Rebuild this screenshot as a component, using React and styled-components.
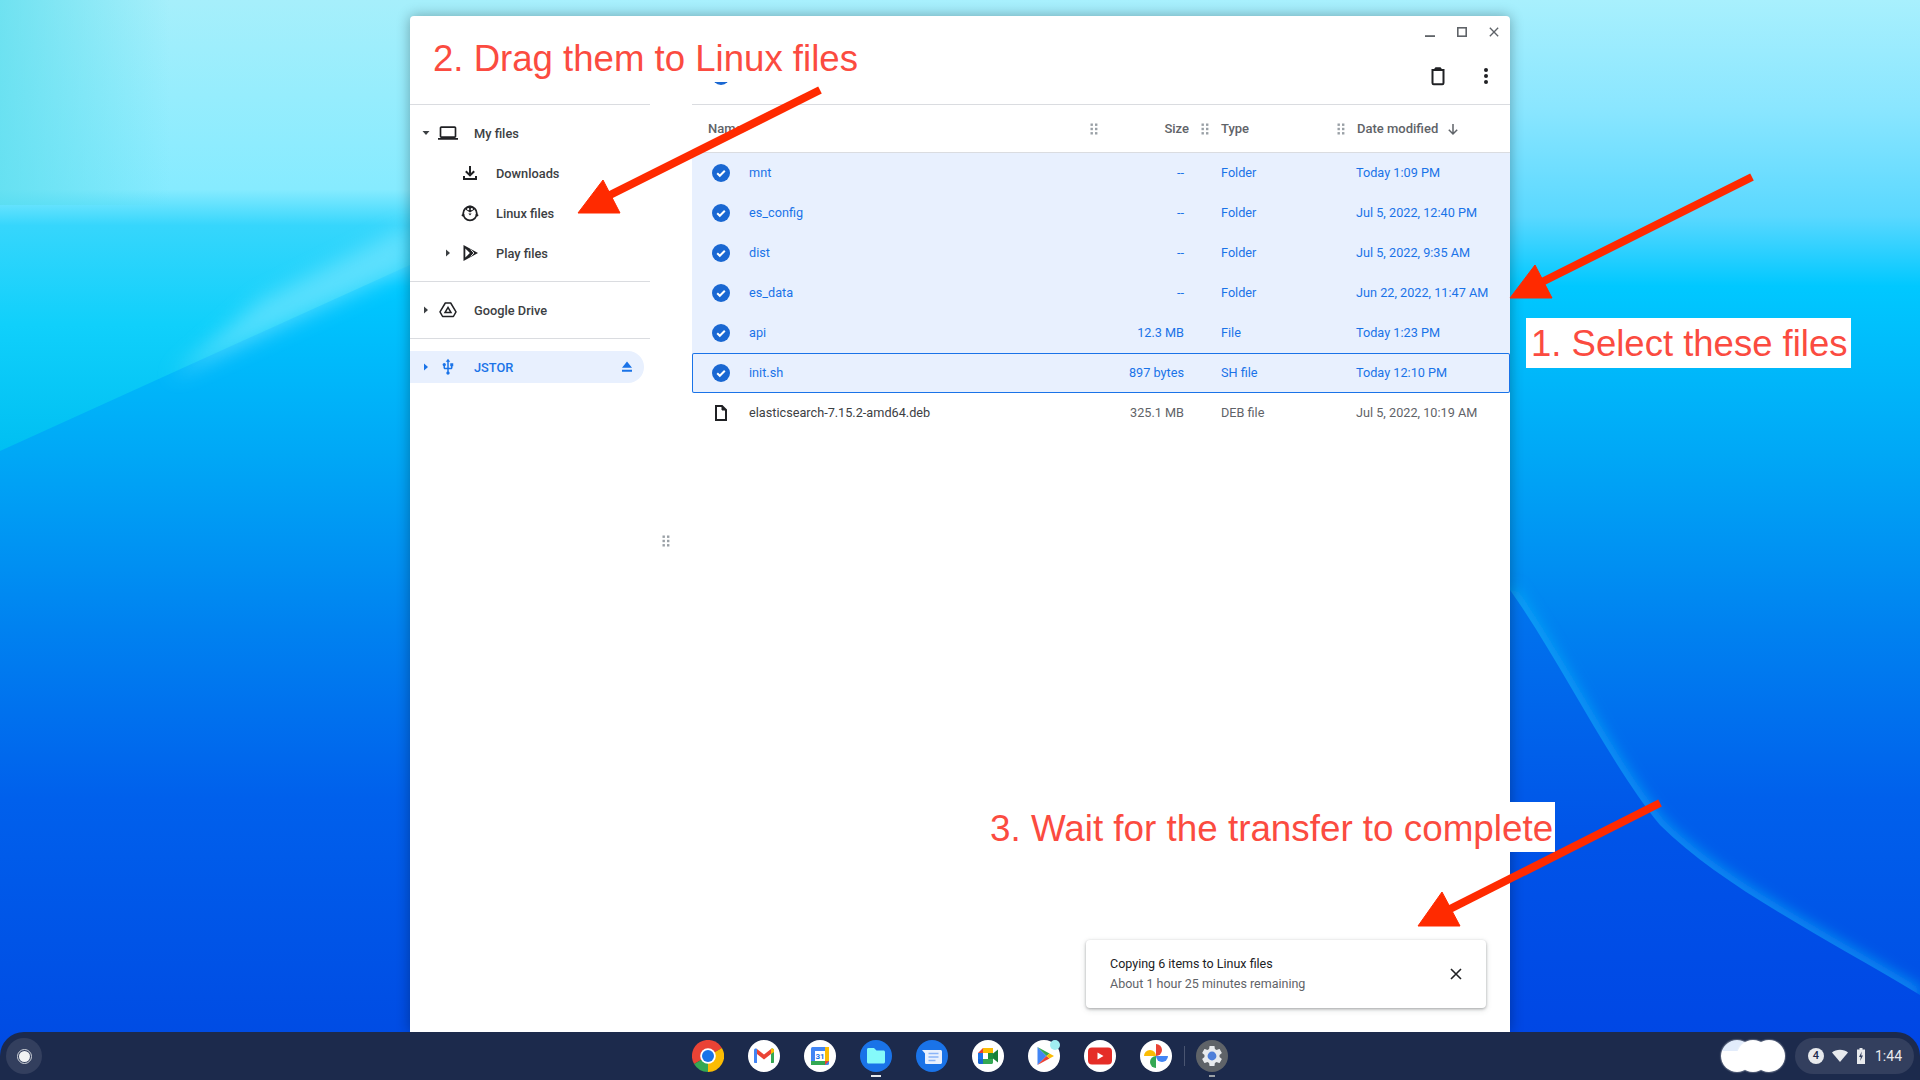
import React from "react";
import styled, { createGlobalStyle } from "styled-components";

const GlobalStyle = createGlobalStyle`
  html, body { margin: 0; padding: 0; }
  body { font-family: Roboto, "Liberation Sans", sans-serif; overflow: hidden; }
`;

const Desktop = styled.div`
  position: relative;
  width: 1920px;
  height: 1080px;
  display: flex;
  flex-direction: column;
  overflow: hidden;
  background: #0060ea;
`;

const Wallpaper = styled.svg`
  position: absolute;
  inset: 0;
`;

const Overlay = styled.svg`
  position: absolute;
  inset: 0;
  pointer-events: none;
`;

const Stage = styled.div`
  position: relative;
  flex: 1;
  display: flex;
  padding: 16px 410px 0;
  min-height: 0;
`;

const Window = styled.div`
  position: relative;
  flex: 1;
  min-width: 0;
  display: flex;
  flex-direction: column;
  background: #fff;
  border-radius: 4px 4px 0 0;
  box-shadow: 0 0 14px rgba(0, 0, 0, 0.32);
`;

const Header = styled.div`
  display: flex;
  justify-content: space-between;
  height: 89px;
`;

const HeaderLeft = styled.div`
  width: 240px;
  border-bottom: 1px solid #dadce0;
`;

const HeaderRight = styled.div`
  width: 818px;
  border-bottom: 1px solid #dadce0;
`;

const Controls = styled.div`
  display: flex;
  justify-content: flex-end;
  height: 32px;
`;

const Control = styled.div`
  width: 32px;
  height: 32px;
  display: flex;
  align-items: center;
  justify-content: center;
  color: #5f6368;
`;

const Toolbar = styled.div`
  display: flex;
  align-items: center;
  margin-top: 4px;
  height: 48px;
  padding-left: 20px;
`;

const ToolSpacer = styled.div`
  flex: 1;
`;

const ToolButton = styled.div`
  width: 48px;
  height: 48px;
  display: flex;
  align-items: center;
  justify-content: center;
  color: #202124;
`;

const Body = styled.div`
  flex: 1;
  display: flex;
  min-height: 0;
`;

const Sidebar = styled.div`
  width: 240px;
`;

const NavGroup = styled.div`
  padding: 8px 0;
  border-bottom: 1px solid #dadce0;
`;

const NavItem = styled.div`
  display: flex;
  align-items: center;
  height: 40px;
  padding-left: ${(p) => 10 + p.$level * 22}px;
  color: #3c4043;
  font-size: 12.8px;
  font-weight: 500;
`;

const ActiveItem = styled(NavItem)`
  height: 32px;
  width: 234px;
  box-sizing: border-box;
  margin-top: 12px;
  background: #e8f0fe;
  border-radius: 0 16px 16px 0;
  color: #1a73e8;
`;

const Caret = styled.div`
  width: 12px;
  display: flex;
  justify-content: center;
  margin-right: 4px;
`;

const NavIcon = styled.div`
  width: 24px;
  height: 24px;
  display: flex;
  align-items: center;
  justify-content: center;
  margin-right: 14px;
  color: #202124;
  ${ActiveItem} & { color: #1a73e8; }
`;

const NavLabel = styled.div`
  flex: 1;
`;

const EjectIcon = styled.div`
  display: flex;
  margin-right: 10px;
`;

const SplitColumn = styled.div`
  width: 42px;
  display: flex;
  align-items: center;
  justify-content: center;
  padding: 0 10px 56px 0;
  box-sizing: border-box;
`;

const FileList = styled.div`
  flex: 1;
  min-width: 0;
`;

const HeadRow = styled.div`
  display: grid;
  grid-template-columns: 406px 111px 136px minmax(0, 1fr);
  height: 48px;
  box-sizing: border-box;
  border-bottom: 1px solid #dadce0;
  color: #5f6368;
  font-size: 13px;
  font-weight: 500;
`;

const HeadCell = styled.div`
  display: flex;
  align-items: center;
  padding-left: ${(p) => p.$pad || 0}px;
  justify-content: ${(p) => p.$justify || "space-between"};
`;

const SizeLabel = styled.div`
  margin-right: 12px;
`;

const SortIcon = styled.div`
  display: flex;
  margin-left: 8px;
`;

const Row = styled.div`
  display: grid;
  grid-template-columns: 57px minmax(0, 1fr) 120px 172px 154px;
  height: 40px;
  box-sizing: border-box;
  padding-bottom: 1px;
  align-items: center;
  font-size: 12.7px;
  color: ${(p) => (p.$selected ? "#1a73e8" : "#5f6368")};
  background: ${(p) => (p.$selected ? "#e8f0fe" : "transparent")};
  ${(p) => p.$focus && "box-shadow: inset 0 0 0 1px #1a73e8; border-radius: 2px;"}
`;

const RowIcon = styled.div`
  display: flex;
  justify-content: center;
  color: #202124;
`;

const FileName = styled.div`
  color: ${(p) => (p.$selected ? "#1a73e8" : "#3c4043")};
`;

const SizeCell = styled.div`
  text-align: right;
`;

const TypeCell = styled.div`
  padding-left: 37px;
`;

const Toast = styled.div`
  position: absolute;
  right: 24px;
  bottom: 24px;
  width: 400px;
  height: 68px;
  box-sizing: border-box;
  padding: 0 24px;
  display: flex;
  align-items: center;
  justify-content: space-between;
  background: #fff;
  border-radius: 4px;
  box-shadow: 0 1px 3px rgba(60, 64, 67, 0.4), 0 2px 6px rgba(60, 64, 67, 0.15);
`;

const ToastTitle = styled.div`
  font-size: 12.5px;
  line-height: 20px;
  color: #202124;
`;

const ToastSub = styled.div`
  font-size: 12.5px;
  line-height: 20px;
  color: #5f6368;
`;

const ToastClose = styled.div`
  display: flex;
  color: #202124;
`;

const Note = styled.div`
  position: absolute;
  left: ${(p) => p.$x}px;
  top: ${(p) => p.$y}px;
  width: ${(p) => p.$w}px;
  height: ${(p) => p.$h}px;
  box-sizing: border-box;
  padding-left: ${(p) => p.$pad}px;
  background: #fff;
  color: #fb4b40;
  font-family: "Liberation Sans", Arial, sans-serif;
  font-size: ${(p) => p.$size}px;
  line-height: ${(p) => p.$line}px;
  white-space: nowrap;
`;

const Shelf = styled.div`
  position: relative;
  height: 48px;
  display: grid;
  grid-template-columns: 1fr auto 1fr;
  align-items: center;
  background: #1c2a4c;
  border-radius: 24px 24px 0 0;
`;

const ShelfLeft = styled.div`
  display: flex;
  padding-left: 6px;
`;

const Launcher = styled.div`
  width: 36px;
  height: 36px;
  border-radius: 50%;
  background: #333f5e;
  display: flex;
  align-items: center;
  justify-content: center;
`;

const LauncherRing = styled.div`
  width: 11px;
  height: 11px;
  border-radius: 50%;
  background: #f1f3f4;
  outline: 1px solid #cfd3da;
  outline-offset: 1.5px;
`;

const AppRow = styled.div`
  display: flex;
  align-items: center;
  gap: 24px;
`;

const AppIcon = styled.div`
  position: relative;
  width: 32px;
  height: 32px;
  display: flex;

  &::after {
    content: "";
    display: ${(p) => (p.$mark ? "block" : "none")};
    position: absolute;
    left: 50%;
    bottom: -5px;
    width: ${(p) => p.$mark}px;
    height: 2px;
    transform: translateX(-50%);
    background: ${(p) => (p.$mark > 6 ? "#e8eaed" : "#9aa0a6")};
  }
`;

const ShelfDivider = styled.div`
  width: 1px;
  height: 20px;
  background: #4a5571;
  margin: 0 -12.5px;
`;

const ShelfRight = styled.div`
  display: flex;
  align-items: center;
  justify-content: flex-end;
  padding-right: 6px;
`;

const Thumbs = styled.div`
  display: flex;
  margin-right: 10px;
`;

const Thumb = styled.div`
  width: 32px;
  height: 32px;
  border-radius: 50%;
  background: ${(p) =>
    p.$first ? "linear-gradient(180deg, #e2ecfb 0 34%, #fff 34%)" : "#fff"};
  box-shadow: 0 0 1px 1px rgba(255, 255, 255, 0.25);
  margin-left: ${(p) => (p.$first ? 0 : -16)}px;
`;

const StatusPill = styled.div`
  display: flex;
  align-items: center;
  width: 119px;
  height: 36px;
  box-sizing: border-box;
  padding-left: 13px;
  border-radius: 18px;
  background: #333f5e;
  color: #e8eaed;
  font-size: 14px;
`;

const Badge = styled.div`
  width: 16px;
  height: 16px;
  border-radius: 50%;
  background: #e8eaed;
  color: #1c2a4c;
  font-size: 11px;
  font-weight: 500;
  line-height: 16px;
  text-align: center;
  margin-right: 8px;
`;

const StatusIcon = styled.div`
  display: flex;
  margin-right: ${(p) => p.$gap}px;
`;

const Check = () => (
  <svg width="18" height="18" viewBox="0 0 18 18">
    <circle cx="9" cy="9" r="9" fill="#1967d2" />
    <path d="M5.2 9.3l2.6 2.5 5-5" fill="none" stroke="#fff" strokeWidth="2" />
  </svg>
);

const Arrowhead = ({ open, color = "#3c4043" }) => (
  <svg width="10" height="10" viewBox="0 0 10 10">
    <path d={open ? "M1.5 3h7L5 7z" : "M3 1.5v7L7 5z"} fill={color} />
  </svg>
);

const Dots = () => (
  <svg width="8" height="12" viewBox="0 0 8 12" fill="#9aa0a6">
    <rect x="0.5" y="0.5" width="2.4" height="2.4" />
    <rect x="5" y="0.5" width="2.4" height="2.4" />
    <rect x="0.5" y="4.8" width="2.4" height="2.4" />
    <rect x="5" y="4.8" width="2.4" height="2.4" />
    <rect x="0.5" y="9.1" width="2.4" height="2.4" />
    <rect x="5" y="9.1" width="2.4" height="2.4" />
  </svg>
);

const CloseIcon = ({ size = 12, width = 1.6 }) => (
  <svg width={size} height={size} viewBox="0 0 12 12">
    <path d="M1 1l10 10M11 1L1 11" stroke="currentColor" strokeWidth={width} fill="none" />
  </svg>
);

const LaptopIcon = () => (
  <svg width="20" height="20" viewBox="0 0 24 24" fill="currentColor">
    <path d="M20 18c1.1 0 1.99-.9 1.99-2L22 6c0-1.1-.9-2-2-2H4c-1.1 0-2 .9-2 2v10c0 1.1.9 2 2 2H0v2h24v-2h-4zM4 6h16v10H4V6z" />
  </svg>
);

const DownloadIcon = () => (
  <svg width="16" height="16" viewBox="0 0 16 16" fill="none" stroke="currentColor" strokeWidth="2">
    <path d="M8 1v9M3.8 6.2L8 10.4l4.2-4.2M2 11v3h12v-3" />
  </svg>
);

const PenguinIcon = () => (
  <svg width="18" height="18" viewBox="0 0 18 18">
    <circle cx="9" cy="9.5" r="6.8" fill="none" stroke="currentColor" strokeWidth="1.8" />
    <path d="M9 1.5c2.6 0 4.2 2 4.2 4.2L9 8.6 4.8 5.7C4.8 3.5 6.4 1.5 9 1.5z" fill="currentColor" />
    <circle cx="7.2" cy="5.2" r="1.1" fill="#fff" />
    <circle cx="10.8" cy="5.2" r="1.1" fill="#fff" />
    <path d="M7.4 9.4h3.2L9 11.4z" fill="currentColor" />
    <path d="M0.8 11.8l2.4-1.4M17.2 11.8l-2.4-1.4" stroke="currentColor" strokeWidth="1.8" />
  </svg>
);

const PlayIcon = () => (
  <svg width="18" height="18" viewBox="0 0 18 18">
    <path d="M2.5 1v16L17 9z" fill="currentColor" />
    <path d="M4.3 4.4v9.2L8.9 9z" fill="#fff" />
    <path d="M9.8 5.6l3.1 3.4-3.1 3.4" fill="none" stroke="#fff" strokeWidth="0.9" />
  </svg>
);

const DriveIcon = () => (
  <svg width="18" height="18" viewBox="0 0 18 18" fill="none" stroke="currentColor" strokeWidth="1.5">
    <path d="M6.3 2h5.4L17 10.8 14.4 15.5H3.6L1 10.8z" strokeLinejoin="round" />
    <path d="M9 6.4l3 5.1H6z" />
  </svg>
);

const UsbIcon = () => (
  <svg width="18" height="18" viewBox="0 0 24 24" fill="currentColor">
    <path d="M15 7v4h1v2h-3V5h2l-3-4-3 4h2v8H8v-2.07c.7-.37 1.2-1.08 1.2-1.93 0-1.21-.99-2.2-2.2-2.2-1.21 0-2.2.99-2.2 2.2 0 .85.5 1.56 1.2 1.93V13c0 1.11.89 2 2 2h3v3.05c-.71.37-1.2 1.1-1.2 1.95 0 1.22.99 2.2 2.2 2.2 1.21 0 2.2-.98 2.2-2.2 0-.85-.49-1.58-1.2-1.95V15h3c1.11 0 2-.89 2-2v-2h1V7h-4z" />
  </svg>
);

const Eject = () => (
  <svg width="14" height="14" viewBox="0 0 14 14" fill="#1a73e8">
    <path d="M7 1.5l5 6.2H2zM2 9.7h10v2H2z" />
  </svg>
);

const TrashIcon = () => (
  <svg width="20" height="20" viewBox="0 0 20 20" fill="none" stroke="currentColor" strokeWidth="2">
    <path d="M4.5 4v13c0 .8.5 1.3 1.2 1.3h8.600c.7 0 1.200-.5 1.200-1.300V4M3.500 4h13M7 3.500l1-1.200h4l1 1.200" />
  </svg>
);

const MoreIcon = () => (
  <svg width="4" height="16" viewBox="0 0 4 16" fill="currentColor">
    <circle cx="2" cy="2" r="2" />
    <circle cx="2" cy="8" r="2" />
    <circle cx="2" cy="14" r="2" />
  </svg>
);

const FileIcon = () => (
  <svg width="14" height="16" viewBox="0 0 14 16">
    <path d="M2 1h6l4 4v10H2z" fill="none" stroke="currentColor" strokeWidth="2" />
    <path d="M8 1l4 4H8z" fill="currentColor" stroke="currentColor" />
  </svg>
);

const SortDown = () => (
  <svg width="14" height="14" viewBox="0 0 14 14" fill="none" stroke="#5f6368" strokeWidth="1.5">
    <path d="M7 2v10M2.8 7.8L7 12l4.2-4.2" />
  </svg>
);

const ChromeIcon = () => (
  <svg width="32" height="32" viewBox="0 0 32 32">
    <path d="M16 16L2.1 24A16 16 0 0 1 29.9 8z" fill="#ea4335" />
    <path d="M16 16L29.9 8A16 16 0 0 1 16 32z" fill="#fbbc04" />
    <path d="M16 16V32A16 16 0 0 1 2.1 24z" fill="#34a853" />
    <circle cx="16" cy="16" r="7.8" fill="#fff" />
    <circle cx="16" cy="16" r="6" fill="#1a73e8" />
  </svg>
);

const GmailIcon = () => (
  <svg width="32" height="32" viewBox="0 0 32 32">
    <circle cx="16" cy="16" r="16" fill="#fff" />
    <path d="M6 10.5c0-2 2-2.5 3-1.5v14H7c-.6 0-1-.4-1-1z" fill="#4285f4" />
    <path d="M26 10.5c0-2-2-2.5-3-1.5v14h2c.6 0 1-.4 1-1z" fill="#34a853" />
    <path d="M9 9l7 5.500L23 9v5l-7 5.500L9 14z" fill="#ea4335" />
    <path d="M23 9c1-1 3-.5 3 1.500V12l-3 2z" fill="#fbbc04" />
  </svg>
);

const CalendarIcon = () => (
  <svg width="32" height="32" viewBox="0 0 32 32">
    <circle cx="16" cy="16" r="16" fill="#fff" />
    <rect x="7" y="7" width="18" height="18" rx="1.5" fill="#4285f4" />
    <rect x="21" y="7" width="4" height="14" fill="#fbbc04" />
    <rect x="7" y="21" width="14" height="4" fill="#34a853" />
    <path d="M21 21h4l-4 4z" fill="#ea4335" />
    <rect x="11" y="11" width="10" height="10" fill="#fff" />
    <text x="16" y="19" fontSize="8" fontWeight="700" fontFamily="Roboto" textAnchor="middle" fill="#1a73e8">31</text>
  </svg>
);

const FilesIcon = () => (
  <svg width="32" height="32" viewBox="0 0 32 32">
    <circle cx="16" cy="16" r="16" fill="#1a73e8" />
    <path d="M7 9.5c0-.8.6-1.5 1.5-1.5H14l2.5 2.5h7c.8 0 1.5 .7 1.5 1.5v10c0 .8-.7 1.500-1.500 1.500h-15C7.600 23.500 7 22.800 7 22z" fill="#85fafa" />
  </svg>
);

const MessagesIcon = () => (
  <svg width="32" height="32" viewBox="0 0 32 32">
    <circle cx="16" cy="16" r="16" fill="#1a73e8" />
    <path d="M6 10h18.5c.8 0 1.5 .7 1.5 1.5v11c0 .8-.7 1.5-1.5 1.5h-14c-1 0-1.5-.5-1.5-1.5V13.5z" fill="#e8f0fe" />
    <path d="M12.5 13.5h10M12.5 17h10M12.5 20.5h7" stroke="#8ab4f8" strokeWidth="1.3" />
  </svg>
);

const MeetIcon = () => (
  <svg width="32" height="32" viewBox="0 0 32 32">
    <circle cx="16" cy="16" r="16" fill="#fff" />
    <path d="M11 8h10v5H11z" fill="#fbbc04" />
    <path d="M11 8v5H6z" fill="#ea4335" />
    <path d="M6 13h5v6H6z" fill="#1a73e8" />
    <path d="M6 19h5v5H7.5C6.7 24 6 23.3 6 22.5z" fill="#1967d2" />
    <path d="M11 19h10v3.500c0 .8-.7 1.500-1.500 1.500H11z" fill="#34a853" />
    <path d="M16 13h5v6h-5z" fill="#1e8e3e" />
    <path d="M21 13.5l5-4v13l-5-4z" fill="#188038" />
  </svg>
);

const StoreIcon = () => (
  <svg width="32" height="32" viewBox="0 0 32 32">
    <circle cx="16" cy="16" r="16" fill="#fff" />
    <path d="M9.5 7v18l9-9z" fill="#4285f4" />
    <path d="M9.5 7l12 6.5-3 2.5z" fill="#34a853" />
    <path d="M9.5 25l12-6.5-3-2.5z" fill="#ea4335" />
    <path d="M21.5 13.5l4.5 2.5-4.500 2.500-3-2.500z" fill="#fbbc04" />
    <circle cx="27" cy="5" r="5" fill="#a0eef0" />
  </svg>
);

const YouTubeIcon = () => (
  <svg width="32" height="32" viewBox="0 0 32 32">
    <circle cx="16" cy="16" r="16" fill="#fff" />
    <rect x="4" y="7.5" width="24" height="17" rx="4" fill="#e52d27" />
    <path d="M13.5 12.5v7l6-3.500z" fill="#fff" />
  </svg>
);

const PhotosIcon = () => (
  <svg width="32" height="32" viewBox="0 0 32 32">
    <circle cx="16" cy="16" r="16" fill="#fff" />
    <path d="M16 16A6 6 0 0 0 16 4z" fill="#fbbc04" transform="rotate(-90 16 16)" />
    <path d="M16 16A6 6 0 0 0 16 4z" fill="#ea4335" />
    <path d="M16 16A6 6 0 0 0 16 4z" fill="#4285f4" transform="rotate(90 16 16)" />
    <path d="M16 16A6 6 0 0 0 16 4z" fill="#34a853" transform="rotate(180 16 16)" />
  </svg>
);

const SettingsIcon = () => (
  <svg width="32" height="32" viewBox="0 0 32 32">
    <circle cx="16" cy="16" r="16" fill="#5f6368" />
    <g transform="translate(3.4 3.4) scale(1.05)">
      <path d="M19.14 12.94c.04-.3.06-.61.06-.94 0-.32-.02-.64-.07-.94l2.03-1.58c.18-.14.23-.41.12-.61l-1.92-3.32c-.12-.22-.37-.29-.59-.22l-2.39.96c-.5-.38-1.03-.7-1.62-.94l-.36-2.54c-.04-.24-.24-.41-.48-.41h-3.84c-.24 0-.43.17-.47.41l-.36 2.54c-.59.24-1.13.57-1.62.94l-2.39-.96c-.22-.08-.47 0-.59.22L2.74 8.87c-.12.21-.08.47.12.61l2.03 1.58c-.05.3-.09.63-.09.94s.02.64.07.94l-2.03 1.58c-.18.14-.23.41-.12.61l1.92 3.32c.12.22.37.29.59.22l2.39-.96c.5.38 1.03.7 1.62.94l.36 2.54c.05.24.24.41.48.41h3.84c.24 0 .44-.17.47-.41l.36-2.54c.59-.24 1.13-.56 1.62-.94l2.39.96c.22.08.47 0 .59-.22l1.92-3.32c.12-.22.07-.47-.12-.61l-2.01-1.58z" fill="#e8eaed" />
      <circle cx="12" cy="12" r="4.2" fill="#4f7fd9" />
    </g>
  </svg>
);

const Wifi = () => (
  <svg width="16" height="14" viewBox="0 0 16 14" fill="#e8eaed">
    <path d="M0 3.5C2 1.7 4.9.8 8 .8s6 .9 8 2.7L8 13z" />
  </svg>
);

const Battery = () => (
  <svg width="8" height="16" viewBox="0 0 8 16">
    <path d="M2.5 0h3v1.5H8V16H0V1.5h2.500z" fill="#e8eaed" />
    <path d="M4.8 3.5L2 9h1.8l-.6 4L6 7.5H4.2z" fill="#333f5e" />
  </svg>
);

const files = [
  { name: "mnt", size: "--", type: "Folder", date: "Today 1:09 PM", selected: true },
  { name: "es_config", size: "--", type: "Folder", date: "Jul 5, 2022, 12:40 PM", selected: true },
  { name: "dist", size: "--", type: "Folder", date: "Jul 5, 2022, 9:35 AM", selected: true },
  { name: "es_data", size: "--", type: "Folder", date: "Jun 22, 2022, 11:47 AM", selected: true },
  { name: "api", size: "12.3 MB", type: "File", date: "Today 1:23 PM", selected: true },
  { name: "init.sh", size: "897 bytes", type: "SH file", date: "Today 12:10 PM", selected: true, focus: true },
  { name: "elasticsearch-7.15.2-amd64.deb", size: "325.1 MB", type: "DEB file", date: "Jul 5, 2022, 10:19 AM" },
];

const apps = [
  { key: "chrome", icon: <ChromeIcon /> },
  { key: "gmail", icon: <GmailIcon /> },
  { key: "calendar", icon: <CalendarIcon /> },
  { key: "files", icon: <FilesIcon />, mark: 10 },
  { key: "messages", icon: <MessagesIcon /> },
  { key: "meet", icon: <MeetIcon /> },
  { key: "store", icon: <StoreIcon /> },
  { key: "youtube", icon: <YouTubeIcon /> },
  { key: "photos", icon: <PhotosIcon /> },
];

const App = () => {
  return (
    <Desktop>
      <GlobalStyle />
      <Wallpaper width="1920" height="1080" viewBox="0 0 1920 1080">
        <defs>
          <linearGradient id="base" x1="0" y1="0" x2="0" y2="1">
            <stop offset="0" stopColor="#a8f0fd" />
            <stop offset="0.1" stopColor="#8ae6ff" />
            <stop offset="0.2" stopColor="#5ad8ff" />
            <stop offset="0.265" stopColor="#00c8ff" />
            <stop offset="0.42" stopColor="#00a8f6" />
            <stop offset="0.58" stopColor="#0082f0" />
            <stop offset="0.74" stopColor="#0060ec" />
            <stop offset="1" stopColor="#0048e2" />
          </linearGradient>
          <linearGradient id="topLeft" x1="0" y1="0" x2="0" y2="1">
            <stop offset="0" stopColor="#a6effb" />
            <stop offset="0.42" stopColor="#86ebff" />
            <stop offset="0.5" stopColor="#36d6fc" />
            <stop offset="0.72" stopColor="#10d0fb" />
            <stop offset="1" stopColor="#00bff2" />
          </linearGradient>
          <linearGradient id="cornerShade" x1="0" y1="0" x2="1" y2="0">
            <stop offset="0" stopColor="#58dcec" stopOpacity="0.7" />
            <stop offset="1" stopColor="#58dcec" stopOpacity="0" />
          </linearGradient>
          <linearGradient id="lowRight" x1="0" y1="0" x2="0" y2="1">
            <stop offset="0" stopColor="#0076ee" />
            <stop offset="0.5" stopColor="#0054e8" />
            <stop offset="1" stopColor="#0044e4" />
          </linearGradient>
          <filter id="soft"><feGaussianBlur stdDeviation="10" /></filter>
          <filter id="glow"><feGaussianBlur stdDeviation="7" /></filter>
        </defs>
        <rect width="1920" height="1080" fill="url(#base)" />
        <path d="M0 0H520V215L0 451z" fill="url(#topLeft)" />
        <rect width="170" height="205" fill="url(#cornerShade)" />
        <path d="M170 378L410 268V225L260 300z" fill="#8aeaff" opacity="0.55" filter="url(#soft)" />
        <path d="M1510 590C1560 660 1610 765 1660 825C1720 885 1820 935 1920 995" stroke="#12b4fb" strokeWidth="12" strokeOpacity="0.7" fill="none" filter="url(#glow)" />
        <path d="M1510 590C1560 660 1610 765 1660 825C1720 885 1820 935 1920 995V1080H1400V590z" fill="url(#lowRight)" />
      </Wallpaper>

      <Stage>
        <Window>
          <Header>
            <HeaderLeft />
            <HeaderRight>
              <Controls>
                <Control>
                  <svg width="10" height="10" viewBox="0 0 10 10"><path d="M0 10h10" stroke="currentColor" strokeWidth="3.6" /></svg>
                </Control>
                <Control>
                  <svg width="10" height="10" viewBox="0 0 10 10"><rect x="0.8" y="0.8" width="8.4" height="8.4" fill="none" stroke="currentColor" strokeWidth="1.6" /></svg>
                </Control>
                <Control><CloseIcon size={10} /></Control>
              </Controls>
              <Toolbar>
                <Check />
                <ToolSpacer />
                <ToolButton><TrashIcon /></ToolButton>
                <ToolButton><MoreIcon /></ToolButton>
              </Toolbar>
            </HeaderRight>
          </Header>
          <Body>
            <Sidebar>
              <NavGroup>
                <NavItem $level={0}>
                  <Caret><Arrowhead open /></Caret>
                  <NavIcon><LaptopIcon /></NavIcon>
                  <NavLabel>My files</NavLabel>
                </NavItem>
                <NavItem $level={1}>
                  <Caret />
                  <NavIcon><DownloadIcon /></NavIcon>
                  <NavLabel>Downloads</NavLabel>
                </NavItem>
                <NavItem $level={1}>
                  <Caret />
                  <NavIcon><PenguinIcon /></NavIcon>
                  <NavLabel>Linux files</NavLabel>
                </NavItem>
                <NavItem $level={1}>
                  <Caret><Arrowhead /></Caret>
                  <NavIcon><PlayIcon /></NavIcon>
                  <NavLabel>Play files</NavLabel>
                </NavItem>
              </NavGroup>
              <NavGroup>
                <NavItem $level={0}>
                  <Caret><Arrowhead /></Caret>
                  <NavIcon><DriveIcon /></NavIcon>
                  <NavLabel>Google Drive</NavLabel>
                </NavItem>
              </NavGroup>
              <ActiveItem $level={0}>
                <Caret><Arrowhead color="#1a73e8" /></Caret>
                <NavIcon><UsbIcon /></NavIcon>
                <NavLabel>JSTOR</NavLabel>
                <EjectIcon><Eject /></EjectIcon>
              </ActiveItem>
            </Sidebar>
            <SplitColumn><Dots /></SplitColumn>
            <FileList>
              <HeadRow>
                <HeadCell $pad={16}>
                  <div>Name</div>
                  <Dots />
                </HeadCell>
                <HeadCell $justify="flex-end">
                  <SizeLabel>Size</SizeLabel>
                  <Dots />
                </HeadCell>
                <HeadCell $pad={12}>
                  <div>Type</div>
                  <Dots />
                </HeadCell>
                <HeadCell $pad={12} $justify="flex-start">
                  <div>Date modified</div>
                  <SortIcon><SortDown /></SortIcon>
                </HeadCell>
              </HeadRow>
              {files.map((f) => (
                <Row key={f.name} $selected={f.selected} $focus={f.focus}>
                  <RowIcon>{f.selected ? <Check /> : <FileIcon />}</RowIcon>
                  <FileName $selected={f.selected}>{f.name}</FileName>
                  <SizeCell>{f.size}</SizeCell>
                  <TypeCell>{f.type}</TypeCell>
                  <div>{f.date}</div>
                </Row>
              ))}
            </FileList>
          </Body>
          <Toast>
            <div>
              <ToastTitle>Copying 6 items to Linux files</ToastTitle>
              <ToastSub>About 1 hour 25 minutes remaining</ToastSub>
            </div>
            <ToastClose><CloseIcon size={12} /></ToastClose>
          </Toast>
        </Window>
      </Stage>

      <Note $x={411} $y={17} $w={480} $h={65} $pad={22} $size={36.6} $line={83}>2. Drag them to Linux files</Note>
      <Note $x={1526} $y={318} $w={325} $h={50} $pad={5} $size={36.5} $line={52}>1. Select these files</Note>
      <Note $x={985} $y={802} $w={570} $h={50} $pad={5} $size={36.8} $line={53}>3. Wait for the transfer to complete</Note>

      <Overlay width="1920" height="1080" viewBox="0 0 1920 1080">
        <g fill="#ff2a00" stroke="#ff2a00">
          <path d="M820 90L608 196" strokeWidth="8" fill="none" />
          <path d="M603 180L578 213H620z" strokeWidth="1" />
          <path d="M1752 177L1540 283" strokeWidth="8" fill="none" />
          <path d="M1535 265L1510 298H1552z" strokeWidth="1" />
          <path d="M1660 803L1450 909" strokeWidth="8" fill="none" />
          <path d="M1442 892L1418 926H1460z" strokeWidth="1" />
        </g>
      </Overlay>

      <Shelf>
        <ShelfLeft>
          <Launcher><LauncherRing /></Launcher>
        </ShelfLeft>
        <AppRow>
          {apps.map((a) => (
            <AppIcon key={a.key} $mark={a.mark}>{a.icon}</AppIcon>
          ))}
          <ShelfDivider />
          <AppIcon $mark={6}><SettingsIcon /></AppIcon>
        </AppRow>
        <ShelfRight>
          <Thumbs>
            <Thumb $first />
            <Thumb />
            <Thumb />
          </Thumbs>
          <StatusPill>
            <Badge>4</Badge>
            <StatusIcon $gap={9}><Wifi /></StatusIcon>
            <StatusIcon $gap={10}><Battery /></StatusIcon>
            <div>1:44</div>
          </StatusPill>
        </ShelfRight>
      </Shelf>
    </Desktop>
  );
};

export default App;
